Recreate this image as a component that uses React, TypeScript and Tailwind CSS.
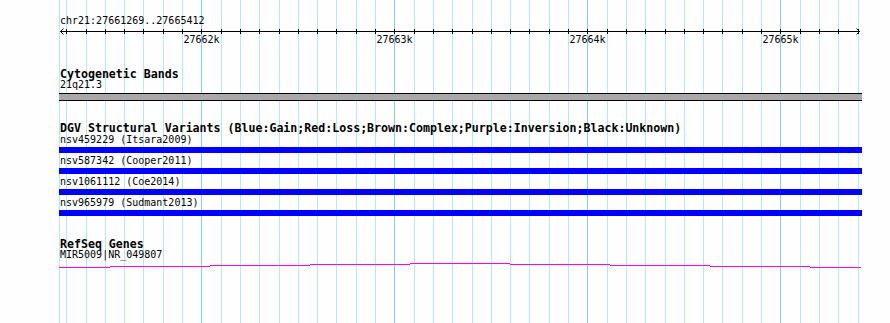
import type { ReactNode } from 'react'

const mono = "font-['DejaVu_Sans_Mono','Liberation_Mono',monospace]"

// 193px per kb, major line for 27662k sits at x=201.3
const MAJOR0 = 201.3
const MINOR = 19.3

const gridLines = Array.from({ length: 42 }, (_, i) => i - 7)
  .map((k) => ({ x: Math.round(MAJOR0 + MINOR * k), major: k % 10 === 0 }))
  .filter((l) => l.x > 60 && l.x < 860)

const majors = [
  { label: '27662k', x: 201 },
  { label: '27663k', x: 394 },
  { label: '27664k', x: 587 },
  { label: '27665k', x: 780 },
]

const variants = [
  'nsv459229 (Itsara2009)',
  'nsv587342 (Cooper2011)',
  'nsv1061112 (Coe2014)',
  'nsv965979 (Sudmant2013)',
]

// stepped gene line, one level per 100px
const geneSteps = [
  { x1: 59, x2: 110, y: 7 },
  { x1: 110, x2: 210, y: 6 },
  { x1: 210, x2: 310, y: 5 },
  { x1: 310, x2: 410, y: 4 },
  { x1: 410, x2: 510, y: 3 },
  { x1: 510, x2: 610, y: 4 },
  { x1: 610, x2: 710, y: 5 },
  { x1: 710, x2: 810, y: 6 },
  { x1: 810, x2: 861, y: 7 },
]

function TrackTitle({ children }: { children: ReactNode }) {
  return <div className="h-[11px] pl-[60px] text-[11.6px] font-bold leading-[11px] whitespace-nowrap text-black">{children}</div>
}

function Label({ children }: { children: ReactNode }) {
  return <div className="h-[10px] pl-[60px] text-[10px] leading-[10px] whitespace-nowrap text-black">{children}</div>
}

function App() {
  return (
    <div className={`relative h-[323px] w-[890px] overflow-hidden bg-[#fdfefd] ${mono}`}>
      <svg className="absolute inset-0" width={890} height={323}>
        <rect x={59} y={0} width={1} height={323} fill="#aeeef0" />
        {gridLines.map((l) => (
          <rect key={l.x} x={l.x} y={0} width={1} height={323} fill={l.major ? '#88cde8' : '#aeeef0'} />
        ))}
      </svg>

      <div className="relative flex flex-col pt-[16px]">
        <Label>chr21:27661269..27665412</Label>

        <svg className="block shrink-0" width={890} height={9}>
          <rect x={60} y={5} width={800} height={1} fill="#000" />
          {gridLines.map((l) => (
            <rect key={l.x} x={l.x} y={3} width={1} height={5} fill="#000" />
          ))}
          <path d="M63.5 2.5 L60.5 5.5 L63.5 8.5" stroke="#000" fill="none" />
          <path d="M856.5 2.5 L859.5 5.5 L856.5 8.5" stroke="#000" fill="none" />
        </svg>

        <div className="relative h-[10px]">
          {majors.map((m) => (
            <span
              key={m.label}
              className="absolute top-0 -translate-x-1/2 text-[10px] leading-[10px] text-black"
              style={{ left: m.x + 0.5 }}
            >
              {m.label}
            </span>
          ))}
        </div>

        <div className="mt-[24px]">
          <TrackTitle>Cytogenetic Bands</TrackTitle>
        </div>
        <Label>21q21.3</Label>
        <div className="ml-[59px] mt-[3px] h-[8px] w-[803px] border-y border-black bg-[#aaa8aa]" />

        <div className="mt-[22px]">
          <TrackTitle>
            DGV Structural Variants (Blue:Gain;Red:Loss;Brown:Complex;Purple:Inversion;Black:Unknown)
          </TrackTitle>
        </div>
        <div className="flex flex-col">
          {variants.map((v) => (
            <div key={v} className="flex flex-col pt-[1px] pb-[2px]">
              <Label>{v}</Label>
              <div className="ml-[59px] mt-[2px] h-[6px] w-[803px] bg-[#0000ff]" />
            </div>
          ))}
        </div>

        <div className="mt-[21px]">
          <TrackTitle>RefSeq Genes</TrackTitle>
        </div>
        <Label>MIR5009|NR_049807</Label>
        <svg className="block shrink-0" width={890} height={10}>
          {geneSteps.map((s) => (
            <rect key={s.x1} x={s.x1} y={s.y} width={s.x2 - s.x1} height={1} fill="#ff00ff" />
          ))}
        </svg>
      </div>
    </div>
  )
}

export default App
